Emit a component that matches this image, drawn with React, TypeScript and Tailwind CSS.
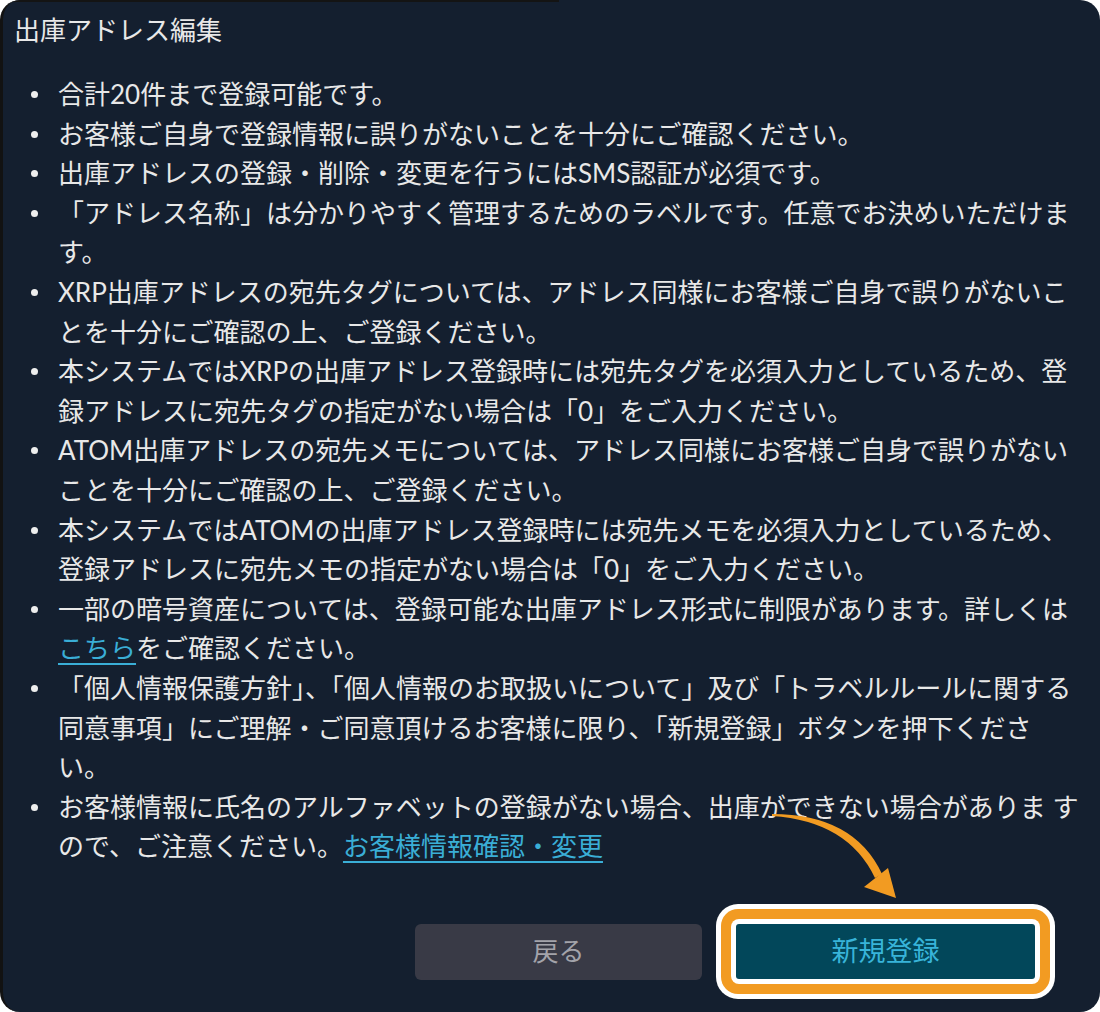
const FONT = "font-['Lato','Noto_Sans_CJK_JP',sans-serif]";

type Part = string | { link: string };

const ITEMS: Part[][][] = [
  [['合計20件まで登録可能です。']],
  [['お客様ご自身で登録情報に誤りがないことを十分にご確認ください。']],
  [['出庫アドレスの登録・削除・変更を行うにはSMS認証が必須です。']],
  [['「アドレス名称」は分かりやすく管理するためのラベルです。任意でお決めいただけま'], ['す。']],
  [['XRP出庫アドレスの宛先タグについては、アドレス同様にお客様ご自身で誤りがないこ'], ['とを十分にご確認の上、ご登録ください。']],
  [['本システムではXRPの出庫アドレス登録時には宛先タグを必須入力としているため、登'], ['録アドレスに宛先タグの指定がない場合は「0」をご入力ください。']],
  [['ATOM出庫アドレスの宛先メモについては、アドレス同様にお客様ご自身で誤りがない'], ['ことを十分にご確認の上、ご登録ください。']],
  [['本システムではATOMの出庫アドレス登録時には宛先メモを必須入力としているため、'], ['登録アドレスに宛先メモの指定がない場合は「0」をご入力ください。']],
  [['一部の暗号資産については、登録可能な出庫アドレス形式に制限があります。詳しくは'], [{ link: 'こちら' }, 'をご確認ください。']],
  [
    ['「個人情報保護方針」、「個人情報のお取扱いについて」及び「トラベルルールに関する'],
    ['同意事項」にご理解・ご同意頂けるお客様に限り、「新規登録」ボタンを押下くださ'],
    ['い。'],
  ],
  [['お客様情報に氏名のアルファベットの登録がない場合、出庫ができない場合がありま す'], ['ので、ご注意ください。', { link: 'お客様情報確認・変更' }]],
];

function Line({ parts }: { parts: Part[] }) {
  return (
    <div className="whitespace-nowrap">
      {parts.map((p, i) =>
        typeof p === 'string' ? (
          <span key={i}>{p}</span>
        ) : (
          <a key={i} href="#" className="text-[#3aaed6] underline decoration-2 underline-offset-[5px]">
            {p.link}
          </a>
        )
      )}
    </div>
  );
}

export default function App() {
  return (
    <div className={`w-[1100px] h-[1012px] bg-white ${FONT}`}>
      <div className="relative w-full h-full bg-[#141f2f] rounded-[20px] border-l-[3px] border-l-[#121212] flex flex-col pl-[11px] overflow-hidden">
        <div className="absolute top-0 left-0 w-[556px] h-[2px] bg-[#141414]" />

        {/* Title */}
        <h1 className="mt-[10px] text-[26px] leading-[40px] text-[#e8e8e8] font-normal">出庫アドレス編集</h1>

        {/* Notes */}
        <ul className="mt-[25px] text-[26px] leading-[39.6px] text-[#e8e8e8]">
          {ITEMS.map((lines, i) => (
            <li key={i} className="flex">
              <div className="w-[44px] shrink-0 pl-[17px] pt-[16px]">
                <div className="w-[7px] h-[7px] rounded-full bg-[#eeeeee]" />
              </div>
              <div>
                {lines.map((parts, j) => (
                  <Line key={j} parts={parts} />
                ))}
              </div>
            </li>
          ))}
        </ul>

        {/* Buttons */}
        <div className="mt-auto mb-[13px] pr-[45px] flex items-center justify-end gap-[14px]">
          <button className="w-[287px] h-[56px] rounded-[6px] bg-[#393a46] text-[26px] text-[#a3a3aa]">戻る</button>
          <div className="p-[5px] bg-white rounded-[22px]">
            <div className="p-[10px] bg-[#f29b22] rounded-[17px]">
              <div className="p-[5px] bg-white rounded-[8px]">
                <button className="w-[299px] h-[55px] rounded-[3px] bg-[#02475a] text-[27px] text-[#38b4d9]">新規登録</button>
              </div>
            </div>
          </div>
        </div>

        {/* Annotation arrow */}
        <svg className="absolute left-[757px] top-[805px]" width="140" height="100" viewBox="0 0 140 100">
          <path d="M12 9 Q94 9 122 69 L115 73 Q88 16 12 11 Z" fill="#f29b22" />
          <polygon points="104,82 128,63 136,93" fill="#f29b22" />
        </svg>
      </div>
    </div>
  );
}
